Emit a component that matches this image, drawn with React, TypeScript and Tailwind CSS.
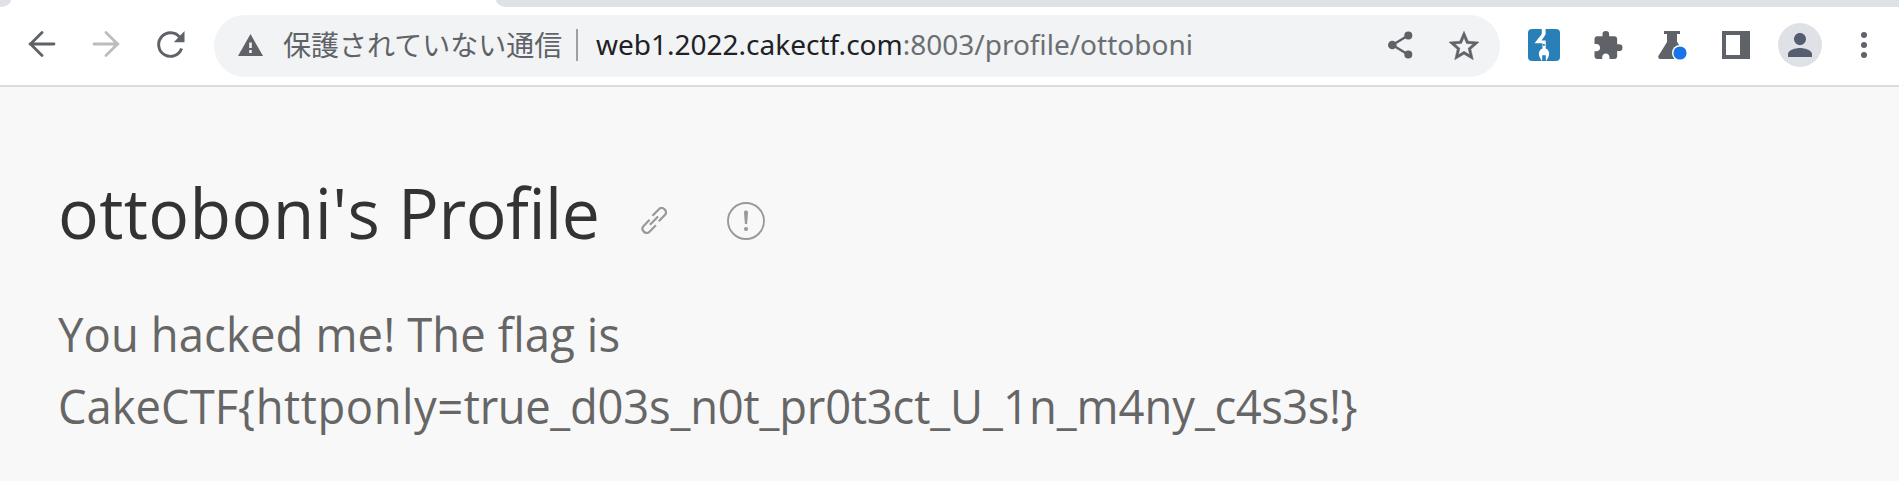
import type { ReactNode } from "react";

function Icon({ className, viewBox, children }: { className: string; viewBox: string; children: ReactNode }) {
  return (
    <svg className={`block shrink-0 ${className}`} viewBox={viewBox} fill="none">
      {children}
    </svg>
  );
}

function TabStrip() {
  return (
    <div className="flex h-[7px] shrink-0 justify-between bg-white">
      <div className="h-[7px] w-[11px] rounded-br-[11px_7px] bg-[#dee1e6]" />
      <div className="h-[7px] w-[1403px] rounded-bl-[11px_7px] bg-[#dee1e6]" />
    </div>
  );
}

function AddressBar() {
  return (
    <div className="ml-[29px] flex h-[62px] w-[1286px] items-center rounded-full bg-[#f1f3f4] pr-[21px] pl-[24px]">
      <Icon className="h-[22px] w-[25px] -translate-y-px" viewBox="0 0 25 22">
        <path d="M12.5 0L25 22H0L12.5 0z" fill="#5f6368" />
        <path d="M11.2 8.5h2.6v5.5h-2.6zM11.2 16h2.6v3h-2.6z" fill="#f1f3f4" />
      </Icon>
      <span className="ml-[20px] w-[280px] pb-[4px] font-['Noto_Sans_CJK_JP',sans-serif] text-[28px] leading-[40px] font-normal whitespace-nowrap text-[#5f6368]">
        保護されていない通信
      </span>
      <div className="ml-[13px] h-[32px] w-[2px] -translate-y-px bg-[#9aa0a6]" />
      <span className="ml-[18px] pb-[4px] font-['Noto_Sans',sans-serif] text-[28px] leading-[40px] whitespace-nowrap text-[#202124]">
        web1.2022.cakectf.com<span className="text-[#6b6f73]">:8003/profile/ottoboni</span>
      </span>
      <Icon className="ml-auto h-[28px] w-[25px] -translate-y-px" viewBox="0 0 25 28">
        <path d="M20 4.5L4.5 14 20 23.5" stroke="#5f6368" strokeWidth="2.4" />
        <circle cx="20.3" cy="4.6" r="4" fill="#5f6368" />
        <circle cx="4.3" cy="14" r="4.3" fill="#5f6368" />
        <circle cx="20.3" cy="23.4" r="4" fill="#5f6368" />
      </Icon>
      <Icon className="ml-[36px] h-[29px] w-[30px] -translate-y-px" viewBox="2 2 20 19">
        <path
          d="M22 9.24l-7.19-.62L12 2 9.19 8.63 2 9.24l5.46 4.73L5.82 21 12 17.27 18.18 21l-1.63-7.03L22 9.24zM12 15.4l-3.76 2.27 1-4.28-3.32-2.88 4.38-.38L12 6.1l1.71 4.04 4.38.38-3.32 2.88 1 4.28L12 15.4z"
          fill="#5f6368"
          stroke="#5f6368"
          strokeWidth=".35"
        />
      </Icon>
    </div>
  );
}

function Toolbar() {
  return (
    <div className="flex h-[78px] shrink-0 items-center bg-white">
      <Icon className="ml-[28px] h-[26px] w-[28px] -translate-y-[2px]" viewBox="0 0 28 26">
        <path d="M26 13H2M14 1.500L2.500 13 14 24.500" stroke="#5f6368" strokeWidth="2.800" strokeLinecap="round" />
      </Icon>
      <Icon className="ml-[36px] h-[26px] w-[28px] -translate-y-[2px]" viewBox="0 0 28 26">
        <path d="M2 13h24M14 1.500L25.500 13 14 24.500" stroke="#babcbe" strokeWidth="2.800" strokeLinecap="round" />
      </Icon>
      <Icon className="ml-[37px] h-[27px] w-[28px] -translate-y-[2px]" viewBox="0 0 28 27">
        <path d="M22.8 6.3A11.800 11.800 0 1 0 24.600 17.500" stroke="#5f6368" strokeWidth="2.9" />
        <path d="M27.5 0v11.3H16.8z" fill="#5f6368" />
      </Icon>
      <AddressBar />
      <Icon className="ml-[28px] h-[32px] w-[32px] -translate-y-px" viewBox="0 0 32 32">
        <rect width="32" height="32" rx="4" fill="#2980b9" />
        <path d="M13.800 0h3.800v5.500L13.500 11.500h4.200v9h-3.200v-6.200H6.500l7.300-9.300z" fill="#fff" />
        <path
          d="M14.300 19.500h3.600c3.200 1.800 4 5.200 2.500 8.500L18.600 31.500h-.8v-5.300h-3.600v5.300h-.8L11.600 28c-1.500-3.300-.6-6.700 2.700-8.500z"
          fill="#fff"
        />
        <rect x="15" y="15" width="1.800" height="1.800" fill="#2980b9" />
      </Icon>
      <Icon className="ml-[34px] h-[28px] w-[29px] -translate-y-px" viewBox="2 1 21 21">
        <path
          d="M20.500 11H19V7c0-1.100-.9-2-2-2h-4V3.500a2.500 2.500 0 0 0-5 0V5H4c-1.100 0-1.990.9-1.990 2v3.800H3.500c1.490 0 2.700 1.210 2.700 2.700s-1.210 2.700-2.700 2.700H2V20c0 1.100.9 2 2 2h3.800v-1.500c0-1.490 1.210-2.700 2.700-2.700s2.700 1.210 2.700 2.700V22H17c1.100 0 2-.9 2-2v-4h1.500a2.500 2.500 0 0 0 0-5z"
          fill="#5f6368"
        />
      </Icon>
      <Icon className="ml-[35px] h-[30px] w-[30px]" viewBox="0 0 30 30">
        <path
          d="M6 0h16v3h-3v7.500l8 14c1 2-.2 3.500-2 3.500H3c-2.400 0-3.500-1.700-2.300-3.600L9 11V3H6z"
          fill="#5f6368"
        />
        <circle cx="22" cy="22" r="8" fill="#fff" />
        <circle cx="22" cy="22" r="6.600" fill="#1a73e8" />
      </Icon>
      <Icon className="ml-[34px] h-[28px] w-[28px] -translate-y-px" viewBox="0 0 28 28">
        <path d="M0 0h28v28H0zM4 4v20h14V4z" fill="#5f6368" fillRule="evenodd" />
      </Icon>
      <div className="ml-[28px] flex size-[44px] -translate-y-px items-center justify-center rounded-full bg-[#dee1e6]">
        <Icon className="h-[24px] w-[24px]" viewBox="4 4 16 16">
          <path
            d="M12 12c2.210 0 4-1.790 4-4s-1.790-4-4-4-4 1.790-4 4 1.790 4 4 4zm0 2c-2.670 0-8 1.340-8 4v2h16v-2c0-2.660-5.330-4-8-4z"
            fill="#555e71"
          />
        </Icon>
      </div>
      <Icon className="ml-[39px] h-[26px] w-[6px] -translate-y-px" viewBox="0 0 6 26">
        <circle cx="3" cy="3" r="3" fill="#5f6368" />
        <circle cx="3" cy="13" r="3" fill="#5f6368" />
        <circle cx="3" cy="23" r="3" fill="#5f6368" />
      </Icon>
    </div>
  );
}

export default function App() {
  return (
    <div className="flex h-[481px] w-full flex-col overflow-hidden bg-[#f8f8f8]">
      <TabStrip />
      <Toolbar />
      <div className="h-[2px] shrink-0 bg-[#dadcdd]" />
      <main className="pt-[83px] pl-[58px] font-['Open_Sans',sans-serif]">
        <div className="flex h-[84px] items-center">
          <h1 className="w-[583px] origin-left scale-x-[0.97] text-[70px] leading-[84px] whitespace-nowrap text-[#333333]">
            <span className="tracking-[0.37px]">ottoboni's </span>
            <span className="tracking-[-0.5px]">Profile</span>
          </h1>
          <Icon className="h-[27px] w-[26px] translate-y-[8px]" viewBox="0 0 26 27">
            <g stroke="#999" strokeWidth="2.200">
              <path d="M11.500 8.800l6.400-6.600c2-2 4.200-1.300 5.700.2s2.200 3.600.2 5.700l-6 6.100" />
              <path d="M8.600 12.800l-6 6.100c-2 2.100-1.300 4.200.2 5.700s3.700 2.200 5.700.2l6.400-6.600" />
              <path d="M8.900 17.800l8.200-8.300" />
            </g>
          </Icon>
          <Icon className="ml-[60px] h-[38px] w-[38px] translate-y-[9px]" viewBox="0 0 38 38">
            <circle cx="19" cy="19" r="18" stroke="#999" strokeWidth="1.900" />
            <path d="M17 10.500c0-2.600 4-2.600 4 0l-.9 11.500h-2.200z" fill="#999" />
            <circle cx="19" cy="27" r="2.100" fill="#999" />
          </Icon>
        </div>
        <div className="mt-[44px] origin-left scale-x-[0.945] text-[48px] leading-[72px] whitespace-nowrap text-[#666666]">
          <p className="tracking-[0.15px]">You hacked me! The flag is</p>
          <p>
            CakeCTF
            <span className="tracking-[0.6px]">{"{httponly="}</span>
            <span className="tracking-[-0.4px]">true</span>
            <span className="tracking-[-0.2px]">_d03s_n0t_pr0t3ct</span>
            _U_1n_m4ny
            <span className="tracking-[-0.5px]">{"_c4s3s!}"}</span>
          </p>
        </div>
      </main>
    </div>
  );
}
